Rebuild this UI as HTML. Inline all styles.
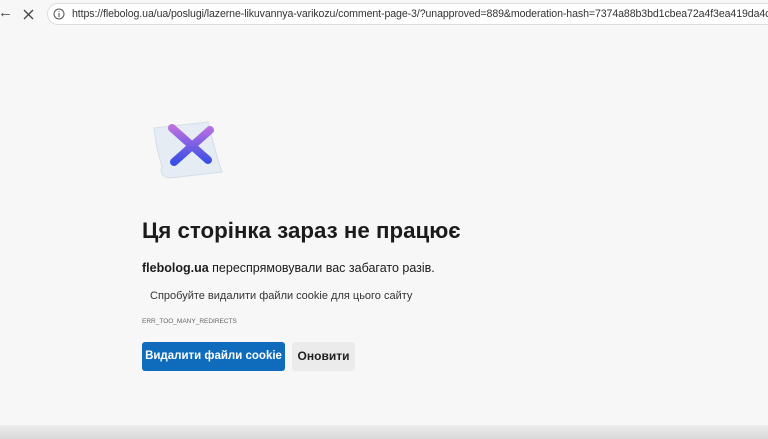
<!DOCTYPE html>
<html><head><meta charset="utf-8"><style>
body{margin:0;width:768px;height:439px;overflow:hidden;background:#f7f7f7;font-family:"Liberation Sans","Noto Sans CJK SC",sans-serif;position:relative;color:#1b1b1b}
.top{position:absolute;left:0;top:0;width:768px;height:29px;background:#f7f7f7}
.addr{position:absolute;left:47px;top:3px;width:730px;height:22px;border:1px solid #dcdcdc;border-radius:12px;background:#fff;box-sizing:border-box;overflow:hidden}
.url{position:absolute;left:24px;top:4px;font-size:10.6px;color:#333;white-space:nowrap;letter-spacing:-0.1px}
.t{position:absolute;white-space:nowrap}
.btn{position:absolute;top:342px;height:29px;border-radius:3px;font-size:12px;font-weight:bold;line-height:29px;text-align:center;white-space:nowrap}
.bot{position:absolute;left:0;top:425px;width:768px;height:14px;background:linear-gradient(#ededed,#d8d8d8)}
</style></head><body>
<div class="top"></div>
<div class="t" style="left:-2px;top:4px;font-size:15px;color:#444">←</div>
<svg style="position:absolute;left:23px;top:9px" width="11" height="11"><path d="M1 1L10 10M10 1L1 10" stroke="#444" stroke-width="1.3"/></svg>
<div class="addr"><div class="url">https://flebolog.ua/ua/poslugi/lazerne-likuvannya-varikozu/comment-page-3/?unapproved=889&amp;moderation-hash=7374a88b3bd1cbea72a4f3ea419da4c8</div></div>
<svg style="position:absolute;left:53px;top:8px" width="12" height="12"><circle cx="6" cy="6" r="5" fill="none" stroke="#555" stroke-width="1"/><path d="M6 5V9M6 3.2V4" stroke="#555" stroke-width="1.1"/></svg>
<svg style="position:absolute;left:148px;top:118px" width="82" height="66">
<path d="M6 10L60 4Q66 30 74 54L22 60Q10 58 14 48Q8 30 6 10Z" fill="#e6ecf3" stroke="#d4dde8"/>
<defs><linearGradient id="g" x1="0" y1="0" x2="0" y2="1"><stop offset="0" stop-color="#b86fe0"/><stop offset="1" stop-color="#3b4fe6"/></linearGradient></defs>
<path d="M24 10L60 42M62 12L26 44" stroke="url(#g)" stroke-width="8" stroke-linecap="round"/>
</svg>
<div class="t" style="left:142px;top:218px;font-size:22.3px;font-weight:600">Ця сторінка зараз не працює</div>
<div class="t" style="left:142px;top:261px;font-size:12.5px"><b>flebolog.ua</b> переспрямовували вас забагато разів.</div>
<div class="t" style="left:150px;top:290px;font-size:11px;color:#333">Спробуйте видалити файли cookie для цього сайту</div>
<div class="t" style="left:142px;top:318px;font-size:6.5px;color:#666">ERR_TOO_MANY_REDIRECTS</div>
<div class="btn" style="left:142px;width:143px;background:#0f6cbd;color:#fff;font-size:11.5px">Видалити файли cookie</div>
<div class="btn" style="left:292px;width:63px;background:#ebebeb;color:#222">Оновити</div>
<div class="bot"></div>
</body></html>
